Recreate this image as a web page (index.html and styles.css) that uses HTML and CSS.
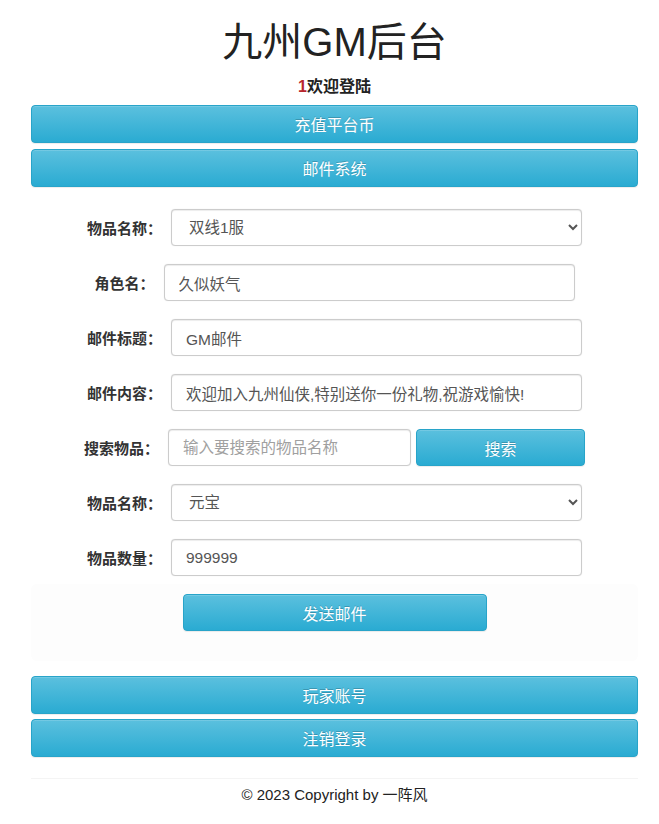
FILE: index.html
```html
<!DOCTYPE html>
<html lang="zh-CN">
<head>
<meta charset="utf-8">
<title>九州GM后台</title>
<link rel="stylesheet" href="styles.css">
</head>
<body>
<div class="page">
  <h1 class="title">九州GM后台</h1>
  <div class="welcome"><span class="uid">1</span>欢迎登陆</div>
  <div class="menu">
    <button class="btn btn-block">充值平台币</button>
    <button class="btn btn-block">邮件系统</button>
  </div>

  <form class="mail-form">
    <div class="row">
      <label class="lbl">物品名称：</label>
      <select class="ctl sel"><option>双线1服</option></select>
    </div>
    <div class="row">
      <label class="lbl">角色名：</label>
      <input class="ctl" type="text" value="久似妖气">
    </div>
    <div class="row">
      <label class="lbl">邮件标题：</label>
      <input class="ctl" type="text" value="GM邮件">
    </div>
    <div class="row">
      <label class="lbl">邮件内容：</label>
      <input class="ctl" type="text" value="欢迎加入九州仙侠,特别送你一份礼物,祝游戏愉快!">
    </div>
    <div class="row row-search">
      <label class="lbl">搜索物品：</label>
      <input class="ctl search-input" type="text" placeholder="输入要搜索的物品名称">
      <button type="button" class="btn search-btn">搜索</button>
    </div>
    <div class="row">
      <label class="lbl">物品名称：</label>
      <select class="ctl sel"><option>元宝</option></select>
    </div>
    <div class="row">
      <label class="lbl">物品数量：</label>
      <input class="ctl" type="text" value="999999">
    </div>
    <div class="send-well">
      <button type="button" class="btn send-btn">发送邮件</button>
    </div>
  </form>

  <div class="menu bottom-menu">
    <button class="btn btn-block">玩家账号</button>
    <button class="btn btn-block">注销登录</button>
  </div>

  <footer class="footer">© 2023 Copyright by 一阵风</footer>
</div>
</body>
</html>
```
FILE: styles.css
```css
* { box-sizing: border-box; }
html, body { margin: 0; padding: 0; background: #fff; }
body {
  font-family: "Liberation Sans", "Noto Sans CJK SC", sans-serif;
  color: #333;
  font-size: 14px;
}
.page {
  width: 607px;
  margin-left: 31px;
  display: flex;
  flex-direction: column;
}
.title {
  margin: 20px 0 0;
  font-size: 40px;
  line-height: 44px;
  font-weight: normal;
  text-align: center;
  color: #222;
}
.welcome {
  margin-top: 13px;
  text-align: center;
  font-weight: bold;
  font-size: 16px;
  line-height: 20px;
  color: #222;
}
.uid { color: #b8262e; }
.menu {
  margin-top: 8px;
  display: flex;
  flex-direction: column;
  gap: 6px;
}
.btn {
  font-family: inherit;
  font-size: 16px;
  color: #fff;
  height: 38px;
  border: 1px solid #28a4c9;
  border-radius: 4px;
  background-color: #2aabd2;
  background-image: linear-gradient(to bottom, #5bc0de 0, #2aabd2 100%);
  box-shadow: inset 0 1px 0 rgba(255,255,255,.15), 0 1px 1px rgba(0,0,0,.075);
  text-shadow: 0 -1px 0 rgba(0,0,0,.2);
  padding: 0 12px;
  cursor: pointer;
}
.btn-block { width: 100%; }
.mail-form {
  margin-top: 22px;
  display: flex;
  flex-direction: column;
  gap: 18px;
}
.row {
  display: flex;
  justify-content: center;
  align-items: center;
  gap: 9px;
}
.lbl {
  font-weight: bold;
  font-size: 15px;
  color: #333;
  white-space: nowrap;
}
.ctl {
  width: 411px;
  height: 37px;
  border: 1px solid #ccc;
  border-radius: 4px;
  box-shadow: inset 0 1px 1px rgba(0,0,0,.075), 0 0 1px rgba(0,0,0,.15);
  background: #fff;
  font-family: inherit;
  font-size: 15.5px;
  color: #555;
  padding: 0 14px;
}
.sel { padding-left: 13px; }
.row-search { gap: 0; }
.row-search .lbl { margin-right: 9px; }
.search-input { width: 243px; }
.search-input::placeholder { color: #a0a0a0; }
.search-btn {
  width: 169px;
  height: 37px;
  margin-left: 5px;
}
.send-well {
  margin-top: -10px;
  padding: 10px 0 30px;
  display: flex;
  justify-content: center;
  background: #fdfdfd;
  border-radius: 6px;
}
.send-btn {
  width: 304px;
  height: 37px;
}
.bottom-menu { margin-top: 15px; gap: 5px; }
.footer {
  margin-top: 21px;
  border-top: 1px solid #f4f4f4;
  padding-top: 6px;
  text-align: center;
  font-size: 15px;
  line-height: 20px;
  color: #222;
}
```
